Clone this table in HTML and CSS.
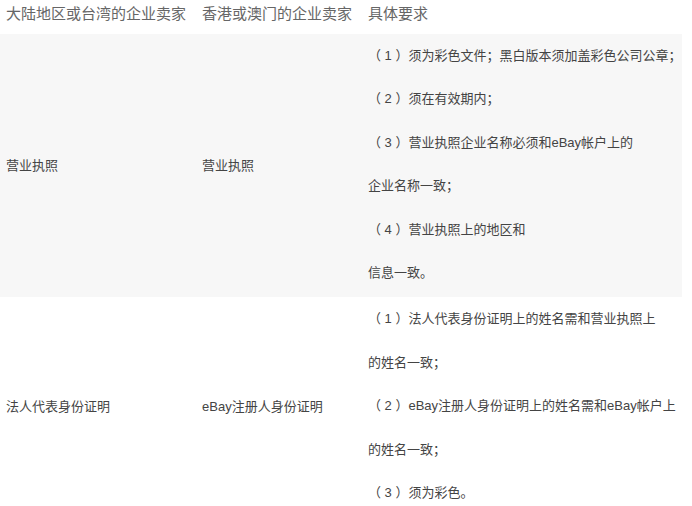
FILE: index.html
```html
<!DOCTYPE html>
<html lang="zh-CN">
  <head>
    <meta charset="UTF-8" />
    <title>企业卖家资质要求</title>
    <link rel="stylesheet" href="styles.css">
  </head>
  <body>
    <table class="req-table">
      <thead>
        <tr>
          <th class="col-cn">大陆地区或台湾的企业卖家</th>
          <th class="col-hk">香港或澳门的企业卖家</th>
          <th class="col-req">具体要求</th>
        </tr>
      </thead>
      <tbody>
        <tr class="row-alt">
          <td>营业执照</td>
          <td>营业执照</td>
          <td class="req">
            <p>（ 1 ）须为彩色文件；黑白版本须加盖彩色公司公章；</p>
            <p>（ 2 ）须在有效期内；</p>
            <p>（ 3 ）营业执照企业名称必须和eBay帐户上的</p>
            <p>企业名称一致；</p>
            <p>（ 4 ）营业执照上的地区和</p>
            <p>信息一致。</p>
          </td>
        </tr>
        <tr>
          <td>法人代表身份证明</td>
          <td>eBay注册人身份证明</td>
          <td class="req">
            <p>（ 1 ）法人代表身份证明上的姓名需和营业执照上</p>
            <p>的姓名一致；</p>
            <p>（ 2 ）eBay注册人身份证明上的姓名需和eBay帐户上</p>
            <p>的姓名一致；</p>
            <p>（ 3 ）须为彩色。</p>
          </td>
        </tr>
      </tbody>
    </table>
  </body>
</html>
```

FILE: styles.css
```css
body {
  margin: 0;
  background-color: #fff;
  font-family: "Liberation Sans", "Noto Sans CJK SC", sans-serif;
  color: #444;
}

.req-table {
  width: 682px;
  border-collapse: collapse;
  table-layout: fixed;
}

.col-cn {
  width: 196px;
}

.col-hk {
  width: 166px;
}

.req-table th {
  height: 34px;
  padding: 0 6px 6px;
  font-size: 15px;
  line-height: 28px;
  font-weight: normal;
  text-align: left;
  color: #666;
  white-space: nowrap;
  box-sizing: border-box;
}

.req-table td {
  padding: 0 6px 3px;
  font-size: 13px;
  vertical-align: middle;
  white-space: nowrap;
}

.row-alt {
  background-color: #f7f7f7;
}

.req p {
  margin: 0;
  line-height: 43.4px;
}
```
